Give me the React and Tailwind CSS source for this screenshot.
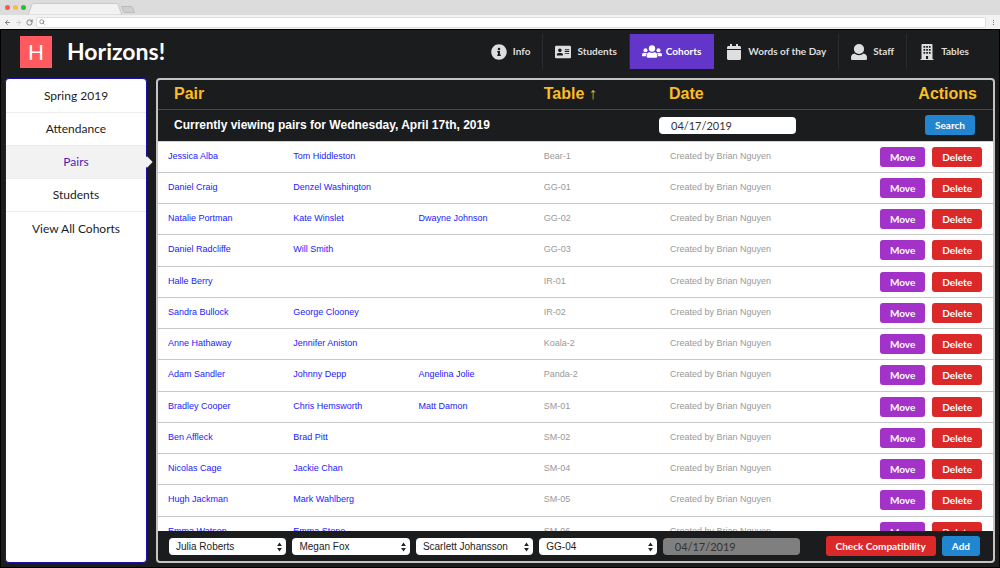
import React, { useState } from "react";
import { FaInfoCircle, FaAddressCard, FaCalendar } from "react-icons/fa";
import { ArrowLeft, ArrowRight, RotateCw, Search } from "lucide-react";

function UserIcon({ className }) {
  return (
    <svg viewBox="0 0 16 16" className={className} fill="currentColor" aria-hidden="true">
      <ellipse cx="8" cy="5" rx="5.1" ry="5" />
      <path d="M0 13.6C0 11.4 1.4 10 3.6 9.6 6 11.7 10 11.7 12.4 9.6 14.6 10 16 11.4 16 13.6V14.4C16 15.4 15.4 16 14.4 16H1.6C.6 16 0 15.4 0 14.4Z" />
    </svg>
  );
}

function UsersIcon({ className }) {
  return (
    <svg viewBox="0 0 60 38" className={className} fill="currentColor" aria-hidden="true">
      <circle cx="30" cy="10" r="9.5" />
      <circle cx="10.500" cy="15" r="6" />
      <circle cx="49.500" cy="15" r="6" />
      <path d="M14 34V31.500Q14 22 23.500 21.500Q30 25 36.500 21.500Q46 22 46 31.500V34Q46 37.500 42.500 37.500H17.500Q14 37.500 14 34Z" />
      <path d="M0 31V28.500Q0 23 5.500 22.500Q10.500 25 15.500 22.500Q11.500 27 11.500 33H2Q0 33 0 31Z" />
      <path d="M60 31V28.500Q60 23 54.500 22.500Q49.500 25 44.500 22.500Q48.500 27 48.500 33H58Q60 33 60 31Z" />
    </svg>
  );
}

function BuildingIcon({ className }) {
  return (
    <svg viewBox="0 0 16 16" className={className} fill="currentColor" fillRule="evenodd" aria-hidden="true">
      <path d="M1.500 15H2.500V.8Q2.500 0 3.300 0H12.700Q13.500 0 13.500.8V15H14.500V16H1.500ZM4.500 2V3.800H6.200V2ZM7.200 2V3.800H8.900V2ZM9.900 2V3.800H11.600V2ZM4.500 5V6.800H6.200V5ZM7.200 5V6.800H8.900V5ZM9.900 5V6.800H11.600V5ZM4.500 8V9.800H6.200V8ZM7.200 8V9.800H8.900V8ZM9.900 8V9.800H11.600V8ZM7 12V15H9.100V12Z" />
    </svg>
  );
}

const navItems = [
  { label: "Info", Icon: FaInfoCircle },
  { label: "Students", Icon: FaAddressCard },
  { label: "Cohorts", Icon: UsersIcon, active: true },
  { label: "Words of the Day", Icon: FaCalendar },
  { label: "Staff", Icon: UserIcon },
  { label: "Tables", Icon: BuildingIcon },
];

const sideItems = ["Spring 2019", "Attendance", "Pairs", "Students", "View All Cohorts"];

const pairs = [
  { names: ["Jessica Alba", "Tom Hiddleston"], table: "Bear-1" },
  { names: ["Daniel Craig", "Denzel Washington"], table: "GG-01" },
  { names: ["Natalie Portman", "Kate Winslet", "Dwayne Johnson"], table: "GG-02" },
  { names: ["Daniel Radcliffe", "Will Smith"], table: "GG-03" },
  { names: ["Halle Berry"], table: "IR-01" },
  { names: ["Sandra Bullock", "George Clooney"], table: "IR-02" },
  { names: ["Anne Hathaway", "Jennifer Aniston"], table: "Koala-2" },
  { names: ["Adam Sandler", "Johnny Depp", "Angelina Jolie"], table: "Panda-2" },
  { names: ["Bradley Cooper", "Chris Hemsworth", "Matt Damon"], table: "SM-01" },
  { names: ["Ben Affleck", "Brad Pitt"], table: "SM-02" },
  { names: ["Nicolas Cage", "Jackie Chan"], table: "SM-04" },
  { names: ["Hugh Jackman", "Mark Wahlberg"], table: "SM-05" },
  { names: ["Emma Watson", "Emma Stone"], table: "SM-06" },
];

function BrowserBar() {
  return (
    <div className="shrink-0">
      <div className="flex h-[15px] items-end bg-[#dcdcdc]">
        <div className="flex gap-[3px] self-center pl-[5px]">
          <span className="size-[5px] rounded-full bg-[#fc5753]" />
          <span className="size-[5px] rounded-full bg-[#fdbc40]" />
          <span className="size-[5px] rounded-full bg-[#1fc231]" />
        </div>
        <svg className="ml-[2px] h-3 w-[108px]" viewBox="0 0 108 12" aria-hidden="true">
          <path d="M0 12L4 1.500Q4.500.5 6 .5H88Q89.500.5 90 1.500L94 12Z" fill="#f2f2f2" stroke="#bdbdbd" strokeWidth=".7" />
          <path d="M93.500 3.500H103Q104 3.500 104.500 4.500L106.500 9.500H97Q96 9.500 95.500 8.500Z" fill="#cfcfcf" stroke="#b0b0b0" strokeWidth=".7" />
        </svg>
      </div>
      <div className="flex h-[14px] items-center bg-[#f2f2f2] pl-1 text-[#777]">
        <button type="button" aria-label="Back"><ArrowLeft className="size-[7px]" strokeWidth={3} /></button>
        <button type="button" aria-label="Forward" className="ml-1 text-[#c8c8c8]"><ArrowRight className="size-[7px]" strokeWidth={3} /></button>
        <button type="button" aria-label="Reload" className="ml-1"><RotateCw className="size-[7px]" strokeWidth={3} /></button>
        <label className="ml-[3px] flex h-[11px] flex-1 items-center rounded-xs border border-[#dedede] bg-white pl-[2px]">
          <Search className="size-[6px] text-[#777]" strokeWidth={3} />
          <input type="text" aria-label="Address" className="h-full min-w-0 flex-1 px-1 text-[8px] outline-none" />
        </label>
        <button type="button" aria-label="Browser menu" className="flex w-[14px] flex-col items-center gap-px">
          <span className="size-px bg-[#777]" />
          <span className="size-px bg-[#777]" />
          <span className="size-px bg-[#777]" />
        </button>
      </div>
    </div>
  );
}

function Header() {
  return (
    <header className="flex items-center justify-between pr-[14px] pl-[15px]">
      <div className="flex items-center gap-[15px]">
        <span className="flex size-8 items-center justify-center bg-[#ff5a5f] text-[21px] leading-none text-white">H</span>
        <h1 className="pb-[2px] text-[23px] leading-8 font-bold text-white">Horizons!</h1>
      </div>
      <nav className="flex">
        {navItems.map(({ label, Icon, active }) => (
          <a
            key={label}
            href="#"
            className={
              "flex h-[35px] items-center border-r px-3 text-[10px] font-bold last:border-r-0 " +
              (active
                ? "gap-1 border-[#6435c9] bg-[#6435c9] text-white"
                : "gap-[6px] border-[#2a2b2c] text-[#dededf]")
            }
          >
            <Icon className={active ? "h-[13px] w-5" : "size-4"} />
            {label}
          </a>
        ))}
      </nav>
    </header>
  );
}

function Sidebar() {
  return (
    <aside className="w-[142px] shrink-0 rounded border border-[#1a0fa8] bg-white pt-px">
      {sideItems.map((label) => {
        const active = label === "Pairs";
        return (
          <a
            key={label}
            href="#"
            className={
              "relative flex h-[33px] items-center justify-center border-b border-[#ececec] text-[12px] last:border-b-0 " +
              (active ? "bg-[#f2f2f2] text-[#4d1fb8]" : "text-[#1b1c1d]")
            }
          >
            {label}
            {active && <span className="absolute top-3 -right-[5px] size-2 rotate-45 bg-[#f2f2f2]" />}
          </a>
        );
      })}
    </aside>
  );
}

const button = "rounded-[3px] font-[Lato,sans-serif] text-[10px] leading-5 font-bold text-white ";

function SelectBox({ label, value }) {
  return (
    <label className="relative flex flex-1">
      <select aria-label={label} className="h-[17px] w-full appearance-none rounded bg-white pl-[7px] font-['Liberation_Sans',sans-serif] text-[10px] text-[#222]">
        <option>{value}</option>
      </select>
      <svg viewBox="0 0 5 10" className="absolute top-1 right-1 h-[10px] w-[5px]" fill="#222" aria-hidden="true">
        <path d="M2.500.5L4.900 4H.1ZM2.500 9.500L.1 6H4.900Z" />
      </svg>
    </label>
  );
}

function PairsPanel() {
  const [date, setDate] = useState("04/17/2019");
  return (
    <main className="flex min-w-0 flex-1 flex-col overflow-hidden rounded border-2 border-[#c4c4c2] font-['Liberation_Sans',sans-serif]">
      <div className="min-h-0 flex-1 overflow-hidden">
        <table className="w-full table-fixed border-collapse text-left text-[9px]">
          <colgroup>
            <col className="w-[15%]" />
            <col className="w-[15%]" />
            <col className="w-[15%]" />
            <col className="w-[15%]" />
            <col className="w-[15%]" />
            <col />
          </colgroup>
          <thead className="text-white">
            <tr className="h-[29px] border-b border-[#4a4a4b] text-[16px] text-[#fbbd23]">
              <th colSpan={3} className="pl-4 font-bold">Pair</th>
              <th className="pl-[10px] font-bold">Table ↑</th>
              <th className="pl-[10px] font-bold">Date</th>
              <th className="pr-4 text-right font-bold">Actions</th>
            </tr>
            <tr className="h-8 border-b border-[#d4d4d5]">
              <th colSpan={4} className="pl-4 text-[12px] font-bold">Currently viewing pairs for Wednesday, April 17th, 2019</th>
              <th colSpan={2} className="pr-[18px] font-normal">
                <div className="flex items-center justify-between">
                  <input
                    type="text"
                    aria-label="Pair date"
                    value={date}
                    onChange={(e) => setDate(e.target.value)}
                    className="h-[17px] w-[137px] rounded bg-white px-3 font-[Lato,sans-serif] text-[11px] text-[#333]"
                  />
                  <button type="button" className={button + "bg-[#2185d0] px-[10px]"}>Search</button>
                </div>
              </th>
            </tr>
          </thead>
          <tbody className="bg-white">
            {pairs.map(({ names, table }) => (
              <tr key={table} className="h-[31px] border-b border-[#c8c8c8] nth-[4n]:h-8">
                {[0, 1, 2].map((i) => (
                  <td key={i} className="pl-[10px]">
                    {names[i] && <a href="#" className="text-[#1a1aff]">{names[i]}</a>}
                  </td>
                ))}
                <td className="pl-[10px] text-[#999]">{table}</td>
                <td className="pl-[11px] whitespace-nowrap text-[#999]">Created by Brian Nguyen</td>
                <td className="pr-[11px]">
                  <div className="flex justify-end gap-[7px]">
                    <button type="button" className={button + "bg-[#a333c8] px-[10px]"}>Move</button>
                    <button type="button" className={button + "bg-[#db2828] px-[10px]"}>Delete</button>
                  </div>
                </td>
              </tr>
            ))}
          </tbody>
        </table>
      </div>
      <form className="flex h-[30px] shrink-0 items-center pr-[13px] pl-[11px]" onSubmit={(e) => e.preventDefault()}>
        <div className="flex w-7/9 items-center gap-[6px]">
          <SelectBox label="First student" value="Julia Roberts" />
          <SelectBox label="Second student" value="Megan Fox" />
          <SelectBox label="Third student" value="Scarlett Johansson" />
          <SelectBox label="Table" value="GG-04" />
          <input
            type="text"
            aria-label="New pair date"
            value={date}
            disabled
            className="h-[17px] w-[137px] rounded bg-[#7f7f7f] px-3 font-[Lato,sans-serif] text-[11px] text-[#333]"
          />
        </div>
        <div className="ml-auto flex gap-[6px]">
          <button type="button" className={button + "bg-[#db2828] px-[10px]"}>Check Compatibility</button>
          <button type="submit" className={button + "bg-[#2185d0] px-[10px]"}>Add</button>
        </div>
      </form>
    </main>
  );
}

export default function App() {
  return (
    <div className="flex h-screen flex-col overflow-hidden font-[Lato,sans-serif]">
      <BrowserBar />
      <div className="flex min-h-0 flex-1 flex-col gap-[9px] border border-black bg-[#1b1c1d] px-1 pt-1 pb-1">
        <Header />
        <div className="flex min-h-0 flex-1 gap-[9px]">
          <Sidebar />
          <PairsPanel />
        </div>
      </div>
    </div>
  );
}
